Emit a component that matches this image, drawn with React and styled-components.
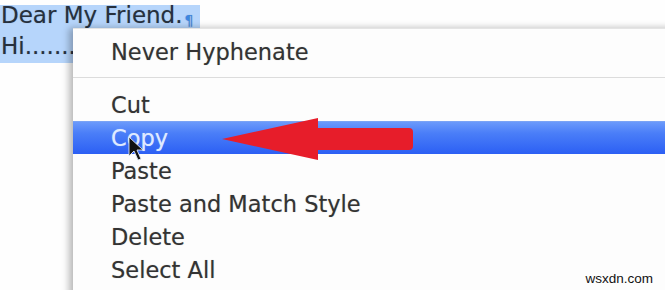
import React from "react";
import styled, { createGlobalStyle } from "styled-components";

const Global = createGlobalStyle`
  html, body { margin: 0; padding: 0; background: #ffffff; }
  body { width: 665px; height: 290px; overflow: hidden; }
`;

const Stage = styled.div`
  position: relative;
  width: 665px;
  height: 290px;
  overflow: hidden;
  background: #fefefe;
  font-family: "DejaVu Sans", "Liberation Sans", sans-serif;
`;

const Doc = styled.div`
  display: flex;
  flex-direction: column;
  padding-top: 5px;
  color: #26303d;
  font-size: 23px;
  text-shadow: 0 0 1px rgba(30, 40, 60, 0.35);
`;

const SelLine = styled.div`
  display: flex;
  align-items: flex-end;
  width: ${(p) => p.$w}px;
  height: ${(p) => p.$h}px;
  padding-left: 1px;
  padding-bottom: ${(p) => p.$pb}px;
  box-sizing: border-box;
  background: #b6d5fb;
  line-height: 1;
  white-space: nowrap;
`;

const Pilcrow = styled.span`
  color: #3d86e0;
  font-size: 14px;
  margin-left: 2px;
`;

const Menu = styled.div`
  position: absolute;
  left: 73px;
  top: 28px;
  width: 640px;
  height: 300px;
  background: #fdfdfd;
  border-top: 1px solid #e4e4e4;
  box-shadow: -4px 0 7px rgba(0, 0, 0, 0.28);
  padding-top: 6px;
  display: flex;
  flex-direction: column;
  font-size: 22.5px;
  color: #333333;
  text-shadow: 0 0 1px rgba(0, 0, 0, 0.3);
`;

const Item = styled.div`
  height: 33px;
  display: flex;
  align-items: center;
  padding-left: 38px;
  box-sizing: border-box;
  white-space: nowrap;
  ${(p) =>
    p.$active &&
    `
    background: linear-gradient(#6b9afb 0%, #4a7ef8 35%, #2c5ff4 100%);
    color: #dfeaff;
    text-shadow: 0 0 1px rgba(220, 235, 255, 0.6);
    border-top: 1px solid #7aa3f5;
  `}
`;

const Separator = styled.div`
  height: 1px;
  background: #dcdcdc;
  margin: 9px 0 10px;
`;

const Overlay = styled.svg`
  position: absolute;
  left: 0;
  top: 0;
  pointer-events: none;
`;

const Watermark = styled.div`
  position: absolute;
  right: 12px;
  bottom: 4px;
  font-family: "Liberation Sans", Arial, sans-serif;
  font-size: 13.5px;
  color: #111;
`;

export default function App() {
  const items = ["Cut", "Copy", "Paste", "Paste and Match Style", "Delete", "Select All"];
  return (
    <Stage>
      <Global />
      <Doc>
        <SelLine $w={200} $h={24} $pb={2}>
          Dear My Friend.<Pilcrow>¶</Pilcrow>
        </SelLine>
        <SelLine $w={73} $h={34} $pb={5}>
          Hi.......
        </SelLine>
      </Doc>
      <Menu>
        <Item>Never Hyphenate</Item>
        <Separator />
        {items.map((t) => (
          <Item key={t} $active={t === "Copy"}>
            {t}
          </Item>
        ))}
      </Menu>
      <Overlay width="665" height="290" viewBox="0 0 665 290">
        <path
          d="M222 139 L318 118 L318 128 L409 128 Q413 128 413 132 L413 146 Q413 150 409 150 L318 150 L318 160 Z"
          fill="#e71d2a"
        />
        <path
          d="M129 137 L129 156 L134 151 L138 160 L141 159 L137 150 L143 150 Z"
          fill="#111"
          stroke="#dfe6f5"
          strokeWidth="0.9"
        />
      </Overlay>
      <Watermark>wsxdn.com</Watermark>
    </Stage>
  );
}
